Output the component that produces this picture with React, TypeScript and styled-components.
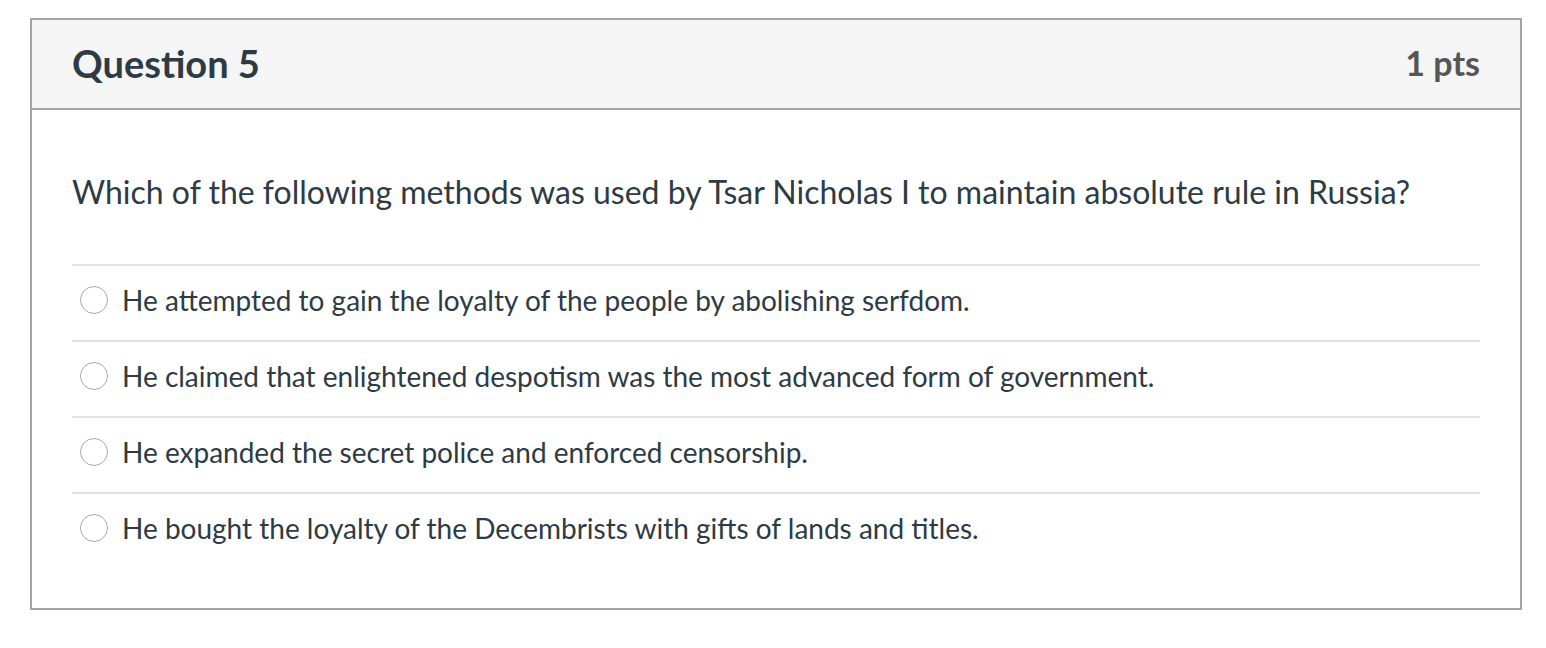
import React from "react";
import styled, { createGlobalStyle } from "styled-components";

const Global = createGlobalStyle`
  html, body { margin: 0; padding: 0; background: #fff; }
  body { font-family: Lato, "Open Sans", sans-serif; color: #2d3b45; }
`;

const Page = styled.div`
  padding: 18px 24px 0 30px;
`;

const Card = styled.div`
  border: 2px solid #a5a5a5;
  background: #fff;
`;

const Header = styled.div`
  display: flex;
  justify-content: space-between;
  align-items: center;
  height: 90px;
  box-sizing: border-box;
  padding: 0 40px 3px;
  background: #f5f5f5;
  border-bottom: 2px solid #a5a5a5;
`;

const Title = styled.h2`
  margin: 0;
  font-size: 38px;
  font-weight: 700;
  color: #2d3b45;
`;

const Points = styled.div`
  font-size: 34px;
  font-weight: 700;
  color: #555;
`;

const Body = styled.div`
  padding: 62px 40px 40px;
`;

const Question = styled.p`
  margin: 0 0 52px;
  font-size: 32px;
  line-height: 40px;
`;

const Option = styled.label`
  display: flex;
  align-items: center;
  gap: 14px;
  height: 76px;
  box-sizing: border-box;
  border-top: 2px solid #e2e2e2;
  padding: 0 0 6px 8px;
  font-size: 28px;
`;

const Radio = styled.span`
  width: 28px;
  height: 28px;
  border-radius: 50%;
  border: 1.5px solid #a8a8a8;
  box-sizing: border-box;
  background: #fff;
  flex: none;
`;

const options = [
  "He attempted to gain the loyalty of the people by abolishing serfdom.",
  "He claimed that enlightened despotism was the most advanced form of government.",
  "He expanded the secret police and enforced censorship.",
  "He bought the loyalty of the Decembrists with gifts of lands and titles.",
];

export default function App() {
  return (
    <>
      <Global />
      <Page>
        <Card>
          <Header>
            <Title>Question 5</Title>
            <Points>1 pts</Points>
          </Header>
          <Body>
            <Question>
              Which of the following methods was used by Tsar Nicholas I to maintain absolute rule in Russia?
            </Question>
            {options.map((o) => (
              <Option key={o}>
                <Radio />
                {o}
              </Option>
            ))}
          </Body>
        </Card>
      </Page>
    </>
  );
}
